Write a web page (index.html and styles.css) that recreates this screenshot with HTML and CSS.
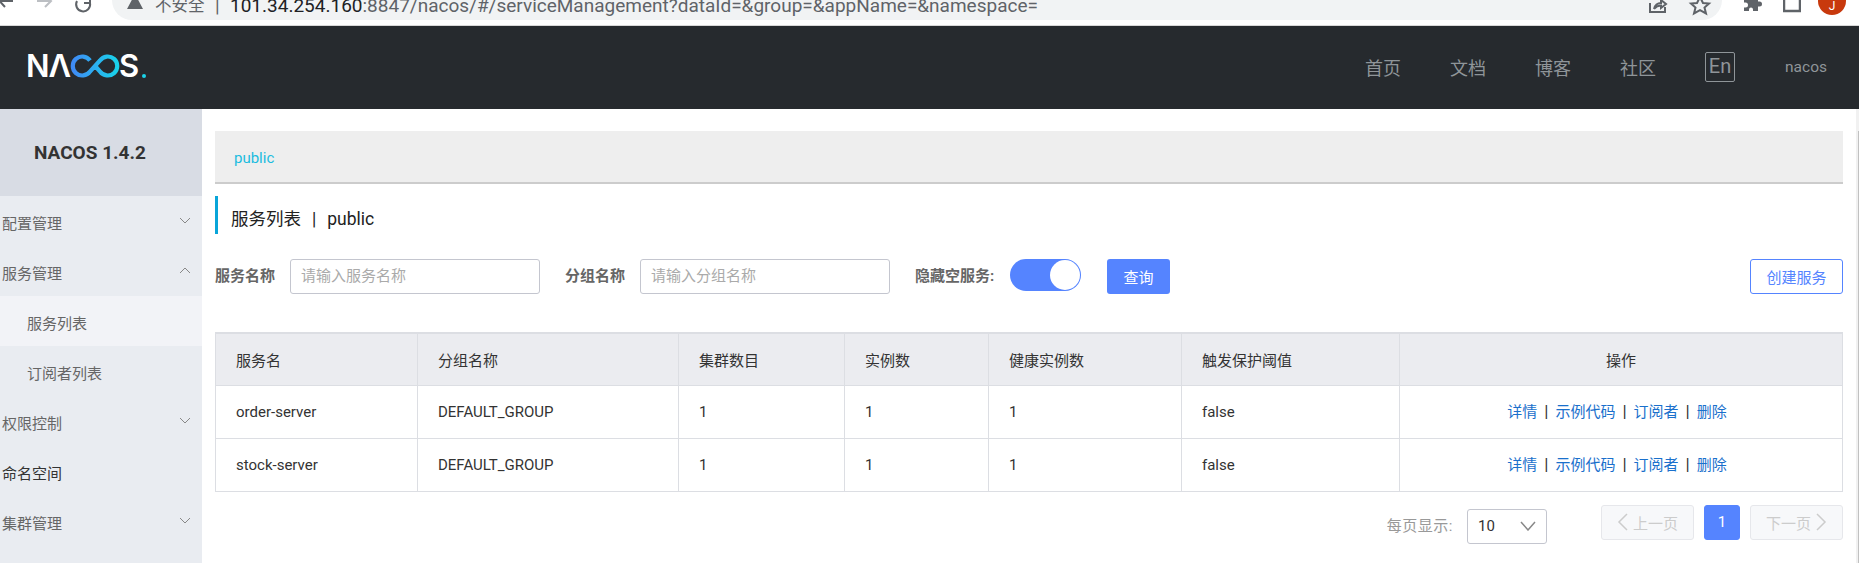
FILE: index.html
```html
<!DOCTYPE html>
<html lang="zh">
<head>
<meta charset="utf-8">
<title>Nacos</title>
<link rel="stylesheet" href="styles.css">
</head>
<body>
<div class="browser">
  <div class="browser-nav">
    <svg class="b-icon" width="20" height="20" viewBox="0 0 20 20"><path d="M13 1H0M5 -4-.5 1 5 7" /></svg>
    <svg class="b-icon fwd" width="20" height="20" viewBox="0 0 20 20"><path d="M0 1h13M8 -4l6 5-6 6" /></svg>
    <svg class="b-icon" width="20" height="20" viewBox="0 0 20 20"><path d="M16 3A7 7 0 1 1 3 1" /><path d="M16 -3v6h-6" /></svg>
  </div>
  <div class="omnibox">
    <svg class="warn" width="16" height="14" viewBox="0 0 16 14"><path d="M8 -6 16 9H0z" /></svg>
    <span class="insecure">不安全</span>
    <span class="omni-sep">|</span>
    <span class="url"><b>101.34.254.160</b>:8847/nacos/#/serviceManagement?dataId=&amp;group=&amp;appName=&amp;namespace=</span>
    <span class="omni-spacer"></span>
    <svg class="b-icon" width="20" height="20" viewBox="0 0 20 20"><path d="M2 3v9h15V7M6 9c1-4 4-6 7-6V0l5 4-5 4V5.500c-3 0-5 1-7 3.500" /></svg>
    <svg class="b-icon star" width="20" height="20" viewBox="0 0 20 20"><path d="M10 -3l3 6 6 .5-4.500 4 1.500 6-6-3.300-6 3.300 1.500-6-4.500-4 6-.5z" /></svg>
  </div>
  <div class="browser-actions">
    <svg class="puzzle" width="20" height="14" viewBox="0 0 20 14"><path d="M2 -2h14v3.500h1.500a2 2 0 0 1 0 5H16V11H11V9.500a2 2 0 0 0-4 0V11H2V7.500H3.500a2 2 0 0 0 0-5H2z" /></svg>
    <svg class="win" width="18" height="14" viewBox="0 0 18 14"><path d="M1 -4h16v15H1z" /></svg>
    <div class="avatar">J</div>
  </div>
</div>

<header class="top">
  <div class="logo" aria-label="NACOS">
    <span class="logo-t">N</span><span class="logo-t logo-a">Λ</span>
    <svg class="logo-inf" width="52" height="24" viewBox="0 0 52 24">
      <defs><linearGradient id="g" x1="0" x2="1" y1="0" y2="0"><stop offset="0" stop-color="#3f8bf5"/><stop offset="1" stop-color="#19d2ea"/></linearGradient></defs>
      <path d="M21 6.500A9.500 9.500 0 1 0 21 17.500L31 6.500A9.500 9.500 0 1 1 31 17.500L27 13" fill="none" stroke="url(#g)" stroke-width="4.200"/>
    </svg>
    <span class="logo-t">S</span><span class="logo-dot"></span>
  </div>
  <nav class="top-nav">
    <a>首页</a><a>文档</a><a>博客</a><a>社区</a>
    <span class="lang">En</span>
    <span class="user">nacos</span>
  </nav>
</header>

<div class="layout">
  <aside class="side">
    <div class="side-title">NACOS 1.4.2</div>
    <div class="mi">配置管理<svg class="chev" width="12" height="7" viewBox="0 0 12 7"><path d="M1 1l5 5 5-5"/></svg></div>
    <div class="mi">服务管理<svg class="chev" width="12" height="7" viewBox="0 0 12 7"><path d="M1 6l5-5 5 5"/></svg></div>
    <div class="mi sub on">服务列表</div>
    <div class="mi sub">订阅者列表</div>
    <div class="mi">权限控制<svg class="chev" width="12" height="7" viewBox="0 0 12 7"><path d="M1 1l5 5 5-5"/></svg></div>
    <div class="mi dark">命名空间</div>
    <div class="mi">集群管理<svg class="chev" width="12" height="7" viewBox="0 0 12 7"><path d="M1 1l5 5 5-5"/></svg></div>
  </aside>

  <main class="main">
    <div class="crumb">public</div>
    <h1 class="title"><span>服务列表</span><span class="title-sep">|</span><span>public</span></h1>

    <div class="form">
      <label class="lbl">服务名称</label>
      <div class="input">请输入服务名称</div>
      <label class="lbl lbl2">分组名称</label>
      <div class="input">请输入分组名称</div>
      <label class="lbl lbl3">隐藏空服务:</label>
      <div class="switch"><span class="knob"></span></div>
      <button class="btn primary">查询</button>
      <span class="grow"></span>
      <button class="btn outline">创建服务</button>
    </div>

    <table class="tbl">
      <colgroup>
        <col class="c1"><col class="c2"><col class="c3"><col class="c4"><col class="c5"><col class="c6"><col>
      </colgroup>
      <thead>
        <tr><th>服务名</th><th>分组名称</th><th>集群数目</th><th>实例数</th><th>健康实例数</th><th>触发保护阈值</th><th class="ctr">操作</th></tr>
      </thead>
      <tbody>
        <tr><td>order-server</td><td>DEFAULT_GROUP</td><td>1</td><td>1</td><td>1</td><td>false</td>
          <td class="ctr"><div class="ops"><a>详情</a><i>|</i><a>示例代码</a><i>|</i><a>订阅者</a><i>|</i><a>删除</a></div></td></tr>
        <tr><td>stock-server</td><td>DEFAULT_GROUP</td><td>1</td><td>1</td><td>1</td><td>false</td>
          <td class="ctr"><div class="ops"><a>详情</a><i>|</i><a>示例代码</a><i>|</i><a>订阅者</a><i>|</i><a>删除</a></div></td></tr>
      </tbody>
    </table>

    <div class="pager">
      <span class="per">每页显示:</span>
      <div class="select"><span>10</span><svg width="16" height="10" viewBox="0 0 16 10"><path d="M1 1l7 8 7-8"/></svg></div>
      <div class="pbtn prev"><svg width="11" height="18" viewBox="0 0 11 18"><path d="M10 1 2 9l8 8"/></svg>上一页</div>
      <div class="pbtn cur">1</div>
      <div class="pbtn next">下一页<svg width="11" height="18" viewBox="0 0 11 18"><path d="M1 1l8 8-8 8"/></svg></div>
    </div>
  </main>
  <div class="scroll"><div class="thumb"></div></div>
</div>
</body>
</html>
```
FILE: styles.css
```css
* { box-sizing: border-box; }
html, body { margin: 0; height: 563px; overflow: hidden; background: #fff; }
body { font-family: Roboto, "Noto Sans CJK SC", sans-serif; font-size: 15px; color: #333; }
svg path { fill: none; }

/* browser chrome */
.browser { height: 26px; display: flex; border-bottom: 1px solid #d8d8d8; background: #fff; overflow: hidden; }
.browser-nav { width: 112px; display: flex; gap: 17px; flex: none; }
.b-icon { overflow: visible; }
.b-icon path { stroke: #5f6368; stroke-width: 2; }
.fwd path { stroke: #bcbfc3; }
.omnibox { width: 1610px; height: 20px; background: #f1f3f4; border-radius: 0 0 20px 20px; display: flex; align-items: flex-start; padding-left: 15px; padding-right: 12px; font-size: 19px; line-height: 12px; color: #5f6368; white-space: nowrap; flex: none; }
.warn { margin-right: 12px; flex: none; }
.warn path { fill: #5f6368; }
.insecure { width: 59px; font-size: 16.500px; }
.omni-sep { margin-left: 1px; width: 15px; }
.url b { font-weight: 400; color: #202124; }
.omni-spacer { flex: 1; }
.star { margin-left: 22px; }
.browser-actions { flex: 1; display: flex; padding-left: 20px; align-items: flex-start; }
.puzzle path { fill: #5f6368; }
.win { margin-left: 21px; }
.win path { stroke: #5f6368; stroke-width: 2.500; }
.avatar { width: 28px; height: 28px; border-radius: 50%; background: #c8390d; color: #fff; margin: -13px 0 0 17px; padding-top: 11px; font-size: 12px; line-height: 16px; text-align: center; }

/* top header */
.top { height: 83px; background: #262a2e; display: flex; align-items: center; padding: 0 32px 0 27px; justify-content: space-between; }
.logo { display: flex; align-items: center; height: 24px; margin-top: -3px; margin-left: -1px; }
.logo-t { font-family: Inter, "Open Sans", sans-serif; font-size: 31px; font-weight: 600; line-height: 24px; color: #fff; }
.logo-a { margin-left: -1px; }
.logo-inf { margin: 0 -2px 0 -2px; }
.logo-dot { width: 4px; height: 4px; background: #1bd2e8; border-radius: 50%; align-self: flex-end; margin-left: 3px; }
.top-nav { display: flex; align-items: center; color: #8f9599; font-size: 18px; margin-top: -2px; }
.top-nav a { margin-right: 49px; }
.lang { width: 30px; height: 30px; border: 1px solid #8f9599; border-radius: 2px; line-height: 26px; text-align: center; font-size: 20px; }
.user { font-size: 15.500px; margin-left: 50px; }

/* layout */
.layout { display: flex; height: 454px; }
.side { width: 202px; background: #e9ecf1; flex: none; color: #77797d; overflow: hidden; }
.side-title { height: 87px; background: #d8dce4; display: flex; align-items: center; font-size: 19px; font-weight: 700; color: #333; padding-left: 34px; }
.mi { height: 50px; display: flex; align-items: center; justify-content: space-between; padding: 2px 11px 0 2px; color: #666; white-space: nowrap; }
.chev path { stroke: #888; stroke-width: 1; }
.chev { margin-top: -3px; }
.sub { padding-left: 27px; }
.on { background: #f2f3f7; }
.dark { color: #333; }

.main { flex: 1; min-width: 0; padding: 22px 13px 0 13px; }
.crumb { height: 53px; background: #eee; border-bottom: 2px solid #ccc; color: #1bbcdf; padding: 16px 0 0 19px; line-height: 22px; }
.title { margin: 12px 0 0; height: 38px; border-left: 3px solid #09a5d9; padding: 4px 0 0 13px; font-size: 17.500px; font-weight: 400; line-height: 38px; color: #222; display: flex; }
.title-sep { margin: 0 11px; }

.form { display: flex; align-items: flex-start; margin-top: 25px; height: 35px; }
.lbl { font-weight: 700; color: #666; line-height: 35px; width: 75px; flex: none; }
.lbl2 { margin-left: 25px; }
.lbl3 { margin-left: 25px; width: 95px; }
.input { width: 250px; height: 35px; border: 1px solid #c4c6cf; border-radius: 3px; color: #aaa; line-height: 33px; padding-left: 10px; flex: none; }
.switch { width: 71px; height: 32px; background: #5584ff; border-radius: 16px; padding: 1px; display: flex; justify-content: flex-end; flex: none; }
.knob { width: 30px; height: 30px; border-radius: 50%; background: #fff; }
.btn { font: inherit; height: 35px; border-radius: 3px; padding: 0; flex: none; }
.primary { width: 63px; margin-left: 26px; background: #5584ff; color: #fff; border: 0; }
.grow { flex: 1; }
.outline { width: 93px; background: #fff; color: #5584ff; border: 1px solid #5584ff; }

.tbl { width: 100%; table-layout: fixed; border-collapse: collapse; margin-top: 38px; border: 1px solid #dcdee3; border-top-width: 2px; }
.c1 { width: 202px; } .c2 { width: 261px; } .c3 { width: 166px; } .c4 { width: 144px; } .c5 { width: 193px; } .c6 { width: 218px; }
.tbl th, .tbl td { height: 53px; padding: 0 20px; border: 1px solid #dcdee3; font-weight: 400; text-align: left; }
.tbl th { background: #ebecf0; height: 52px; }
.tbl .ctr { text-align: center; }
.ops { display: flex; justify-content: center; align-items: center; gap: 7px; padding: 0 8px 2px 0; }
.ops a { color: #1a70cc; }
.ops i { font-style: normal; color: #333; font-size: 17px; }

.pager { display: flex; justify-content: flex-end; align-items: flex-start; margin-top: 13px; }
.per { color: #999; line-height: 35px; margin-top: 4px; letter-spacing: .5px; }
.select { width: 80px; height: 35px; margin: 4px 54px 0 14px; border: 1px solid #c4c6cf; border-radius: 3px; display: flex; align-items: center; justify-content: space-between; padding: 0 10px; color: #333; }
.select path { stroke: #888; stroke-width: 1.500; }
.pbtn { height: 35px; border: 1px solid #e6e7eb; border-radius: 3px; background: #f7f8fa; color: #ccc; display: flex; align-items: center; justify-content: center; gap: 5px; }
.pbtn path { stroke: #ccc; stroke-width: 1.500; }
.prev, .next { width: 93px; }
.cur { width: 36px; margin: 0 10px; background: #5584ff; border-color: #5584ff; color: #fff; }

.scroll { width: 3px; background: #f1f1f1; padding-top: 22px; flex: none; }
.thumb { height: 432px; background: #c1c1c1; margin-left: 2px; }
```
